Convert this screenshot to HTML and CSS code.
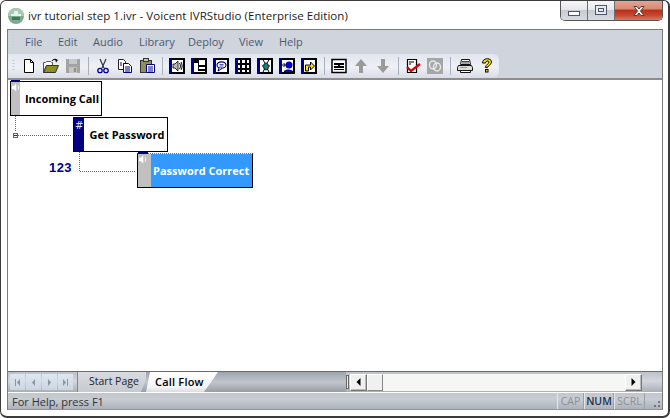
FILE: index.html
```html
<!DOCTYPE html>
<html lang="en">
<head>
<meta charset="utf-8">
<title>ivr tutorial step 1.ivr - Voicent IVRStudio (Enterprise Edition)</title>
<link rel="stylesheet" href="styles.css">
</head>
<body>
<div class="window">
  <header class="titlebar">
    <svg class="appicon" width="16" height="16" viewBox="0 0 16 16"><circle cx="8" cy="8" r="8" fill="#7fa98f"/><path d="M0 8a8 8 0 0 1 16 0z" fill="#a9c9b4"/><rect x="3" y="6" width="10" height="2" fill="#e8f2ea"/><rect x="4" y="9" width="8" height="3" fill="#3f7a57"/><rect x="6" y="3" width="4" height="3" fill="#e8f2ea"/></svg>
    <span class="title">ivr tutorial step 1.ivr - Voicent IVRStudio (Enterprise Edition)</span>
    <div class="caption">
      <div class="capbtn min"><span class="minglyph"></span></div>
      <div class="capbtn max"><span class="maxglyph"></span></div>
      <div class="capbtn close"><svg width="16" height="12" viewBox="0 0 16 12"><path d="M3 1.500h3l2 2.500 2-2.500h3l-3.500 4.500 3.500 4.500h-3l-2-2.500-2 2.500h-3l3.500-4.500z" fill="#f4f1ef" stroke="#5b3a33" stroke-width="1"/></svg></div>
    </div>
  </header>
  <div class="client">
    <nav class="menubar">
      <span class="grip"></span>
      <span class="menu m-file">File</span>
      <span class="menu m-edit">Edit</span>
      <span class="menu m-audio">Audio</span>
      <span class="menu m-lib">Library</span>
      <span class="menu m-dep">Deploy</span>
      <span class="menu m-view">View</span>
      <span class="menu">Help</span>
    </nav>
    <div class="toolbar">
      <span class="grip"></span>
      <span class="tb"><svg width="16" height="16" viewBox="0 0 16 16"><path d="M3.500 1.500h6l3 3v10h-9z" fill="#fff" stroke="#000"/><path d="M9.500 1.500v3h3" fill="none" stroke="#000"/></svg></span>
      <span class="tb"><svg width="16" height="16" viewBox="0 0 16 16"><path d="M0.500 14.500v-10h2l1-1h4l1 1h1v3h-6l-3 7z" fill="#fff" stroke="#555"/><path d="M0.500 14.500l3-7h12l-3 7z" fill="#8f8f1f" stroke="#333"/><path d="M9 3c1-2 3-2 4-1" fill="none" stroke="#000"/><path d="M12 0.500l3 1.500-2 2.500z" fill="#000"/></svg></span>
      <span class="tb"><svg width="16" height="16" viewBox="0 0 16 16"><rect x="1" y="1" width="14" height="14" fill="#a3a3a3"/><rect x="4" y="1" width="8" height="5" fill="#c8c8c8"/><rect x="4" y="9" width="8" height="6" fill="#c4c4c4"/><rect x="9" y="10" width="2" height="4" fill="#8b8b8b"/></svg></span>
      <span class="tsep"></span>
      <span class="tb"><svg width="16" height="16" viewBox="0 0 16 16"><path d="M5 1l4 9M11 1l-4 9" fill="none" stroke="#333" stroke-width="1.200"/><circle cx="5" cy="12.500" r="2.200" fill="none" stroke="#00008b" stroke-width="1.300"/><circle cx="11" cy="12.500" r="2.200" fill="none" stroke="#00008b" stroke-width="1.300"/></svg></span>
      <span class="tb"><svg width="16" height="16" viewBox="0 0 16 16"><path d="M1.500 1.500h5l2 2v2h-2v6h-5z" fill="#fff" stroke="#222"/><path d="M6.500 5.500h5l3 3v6h-8z" fill="#fff" stroke="#00008b"/><path d="M3 5h2M3 7h2M8 9h5M8 11h5M8 13h5" stroke="#00008b"/></svg></span>
      <span class="tb"><svg width="16" height="16" viewBox="0 0 16 16"><rect x="1.500" y="2.500" width="11" height="12" fill="#8f8f5a" stroke="#333"/><rect x="4.500" y="0.500" width="5" height="3" fill="#c8c8a0" stroke="#333"/><path d="M7.500 6.500h8v8h-8z" fill="#fff" stroke="#00008b"/><path d="M9 9h5M9 11h5M9 13h5" stroke="#00008b"/></svg></span>
      <span class="tsep"></span>
      <span class="tb"><svg width="16" height="16" viewBox="0 0 16 16"><rect x="1" y="1" width="14" height="14" fill="#fff" stroke="#000" stroke-width="2"/><rect x="0" y="0" width="3" height="16" fill="#00008b"/><path d="M4 6h2l3-3v10l-3-3h-2z" fill="#bbb" stroke="#000" stroke-width=".8"/><path d="M10.500 5c1.200 2 1.200 4 0 6M12 4c1.500 2.500 1.500 5.500 0 8" fill="none" stroke="#000"/></svg></span>
      <span class="tb"><svg width="16" height="16" viewBox="0 0 16 16"><rect x="1" y="1" width="14" height="14" fill="#fff" stroke="#000" stroke-width="2"/><rect x="0" y="0" width="3" height="16" fill="#00008b"/><rect x="3" y="2" width="5" height="3" fill="#000"/><rect x="7" y="4" width="1" height="9" fill="#000"/><rect x="8" y="7" width="6" height="2" fill="#000"/><rect x="8" y="11" width="6" height="2" fill="#000"/></svg></span>
      <span class="tb"><svg width="16" height="16" viewBox="0 0 16 16"><rect x="1" y="1" width="14" height="14" fill="#fff" stroke="#000" stroke-width="2"/><rect x="0" y="0" width="3" height="16" fill="#00008b"/><ellipse cx="8.500" cy="7" rx="4.500" ry="3.200" fill="#fff" stroke="#00008b" stroke-width="1.200"/><path d="M6 10l-1 3 4-2.500" fill="#fff" stroke="#00008b"/><path d="M6.500 6.500h4M6.500 8h4" stroke="#00008b" stroke-width=".7"/></svg></span>
      <span class="tb"><svg width="16" height="16" viewBox="0 0 16 16"><rect x="1" y="1" width="14" height="14" fill="#fff" stroke="#000" stroke-width="2"/><rect x="0" y="0" width="3" height="16" fill="#00008b"/><path d="M5 2h2v12h-2zM10 2h2v12h-2zM3 5h11v2h-11zM3 10h11v2h-11z" fill="#000"/></svg></span>
      <span class="tb"><svg width="16" height="16" viewBox="0 0 16 16"><rect x="1" y="1" width="14" height="14" fill="#fff" stroke="#000" stroke-width="2"/><rect x="0" y="0" width="3" height="16" fill="#00008b"/><ellipse cx="9" cy="8.500" rx="2.500" ry="3.500" fill="#1a7f7f" stroke="#000" stroke-width=".8"/><path d="M6 2l2 3M12 2l-2 3M5 8h1.500M11.500 8h1.500M6 14l1.500-3M12 14l-1.500-3" stroke="#000"/></svg></span>
      <span class="tb"><svg width="16" height="16" viewBox="0 0 16 16"><rect x="1" y="1" width="14" height="14" fill="#fff" stroke="#000" stroke-width="2"/><rect x="0" y="0" width="3" height="16" fill="#00008b"/><circle cx="10" cy="7" r="3.500" fill="#0000c8"/><path d="M5 13c2-2 6-2 9 0v1h-9z" fill="#0000c8"/><path d="M3 7h3M4.500 5l2 2-2 2" fill="none" stroke="#000"/></svg></span>
      <span class="tb"><svg width="16" height="16" viewBox="0 0 16 16"><rect x="1" y="1" width="14" height="14" fill="#fff" stroke="#000" stroke-width="2"/><rect x="0" y="0" width="3" height="16" fill="#00008b"/><path d="M4.500 13v-6h5v-3l4 4-4 4v-3h-2v4z" fill="#ffe000" stroke="#000"/></svg></span>
      <span class="tsep"></span>
      <span class="tb"><svg width="16" height="16" viewBox="0 0 16 16"><rect x="1" y="1.500" width="14" height="13" fill="#fff" stroke="#000" stroke-width="1.500"/><path d="M3 5h10v2h-4v1h4v2h-10v-2h4v-1h-4z" fill="#000"/><path d="M3 11h10v1h-10z" fill="#000"/></svg></span>
      <span class="tb"><svg width="16" height="16" viewBox="0 0 16 16"><path d="M8 1l6 7h-4v7h-4v-7h-4z" fill="#9a9a9a"/></svg></span>
      <span class="tb"><svg width="16" height="16" viewBox="0 0 16 16"><path d="M8 15l6-7h-4v-7h-4v7h-4z" fill="#9a9a9a"/></svg></span>
      <span class="tsep"></span>
      <span class="tb"><svg width="16" height="16" viewBox="0 0 16 16"><path d="M2.500 1.500h9v13h-9z" fill="#fff" stroke="#000" stroke-width="1.200"/><path d="M4 4h5M4 6h2" stroke="#000"/><path d="M2 9l4 4 9-7" fill="none" stroke="#e00000" stroke-width="2.400"/></svg></span>
      <span class="tb"><svg width="16" height="16" viewBox="0 0 16 16"><rect width="16" height="16" fill="#a6a6a6"/><ellipse cx="6" cy="7" rx="3.500" ry="4" fill="none" stroke="#e8e8e8" stroke-width="1.500"/><ellipse cx="10" cy="9" rx="3.500" ry="4" fill="none" stroke="#e8e8e8" stroke-width="1.500"/></svg></span>
      <span class="tsep"></span>
      <span class="tb"><svg width="16" height="16" viewBox="0 0 16 16"><path d="M4.500 1.500h8l1 5h-10z" fill="#fff" stroke="#111"/><path d="M5 3.500h7M5 5h7" stroke="#111" stroke-width=".8"/><path d="M1.500 7.500h13l1 2v3h-15v-3z" fill="#ddd" stroke="#111"/><rect x="3" y="9" width="7" height="1" fill="#b8a800"/><path d="M3.500 12.500h10v2h-10z" fill="#fff" stroke="#111"/></svg></span>
      <span class="tb"><svg width="16" height="16" viewBox="0 0 16 16"><path d="M3.500 5c0-5.500 9-5.500 9-1 0 3-3.500 3-4 5.500h-2c0-3 3.500-3.500 3.500-5.500 0-1.500-3.500-1.500-3.500 1z" fill="#ffe600" stroke="#000"/><rect x="6.500" y="11.500" width="2.500" height="2.500" fill="#ffe600" stroke="#000"/></svg></span>
    </div>
    <main class="canvas">
      <svg class="wires" width="300" height="120" viewBox="0 0 300 120">
        <path class="wire" d="M7.500 35V51M10 54.500H64M71.500 71V90.500H128"/>
        <rect x="5.500" y="52.500" width="4" height="4" fill="#fff" stroke="#666"/>
        <path d="M6 54.500h3" stroke="#333"/>
      </svg>
      <span class="digits">123</span>
      <div class="node n1"><div class="strip grey"><span class="cap"></span><svg class="spk" width="9" height="9" viewBox="0 0 9 9"><path d="M0 3h2l2-2v7l-2-2h-2zM6 2c1 1.500 1 3.500 0 5" fill="#fff" stroke="#fff" stroke-width=".5"/></svg></div><div class="label">Incoming Call</div></div>
      <div class="node n2"><div class="strip navy"><span class="hash">#</span></div><div class="label">Get Password</div></div>
      <div class="node n3"><div class="strip grey"><span class="cap"></span><svg class="spk" width="9" height="9" viewBox="0 0 9 9"><path d="M0 3h2l2-2v7l-2-2h-2zM6 2c1 1.500 1 3.500 0 5" fill="#fff" stroke="#fff" stroke-width=".5"/></svg></div><div class="label sel">Password Correct</div></div>
    </main>
    <div class="tabbar">
      <div class="navs">
        <span class="nav"><svg width="7" height="7" viewBox="0 0 7 7"><path d="M1 0h1v7h-1zM6 0v7l-3-3.500z" fill="#8a96a4"/></svg></span>
        <span class="nav"><svg width="7" height="7" viewBox="0 0 7 7"><path d="M5 0v7l-3-3.500z" fill="#8a96a4"/></svg></span>
        <span class="nav"><svg width="7" height="7" viewBox="0 0 7 7"><path d="M2 0v7l3-3.500z" fill="#8a96a4"/></svg></span>
        <span class="nav"><svg width="7" height="7" viewBox="0 0 7 7"><path d="M1 0v7l3-3.500zM5 0h1v7h-1z" fill="#8a96a4"/></svg></span>
      </div>
      <div class="tabs">
        <span class="tab start">Start Page</span>
        <span class="tab flow">Call Flow</span>
      </div>
      <div class="hscroll">
        <span class="sgrip"></span>
        <span class="sbtn"><svg width="5" height="8" viewBox="0 0 5 8"><path d="M4.500 0v8l-4-4z" fill="#000"/></svg></span>
        <span class="thumb"></span>
        <span class="track"></span>
        <span class="sbtn right"><svg width="5" height="8" viewBox="0 0 5 8"><path d="M.5 0v8l4-4z" fill="#000"/></svg></span>
      </div>
    </div>
    <footer class="status">
      <span class="msg">For Help, press F1</span>
      <span class="pane off cap-p">CAP</span>
      <span class="pane num-p">NUM</span>
      <span class="pane off scrl-p">SCRL</span>
      <span class="sizegrip"></span>
    </footer>
  </div>
</div>
</body>
</html>
```
FILE: styles.css
```css
* { box-sizing: border-box; }
html, body { margin: 0; padding: 0; background: #fff; }
body { width: 670px; height: 418px; overflow: hidden; font-family: "Open Sans", "Noto Sans", sans-serif; }

.window {
  width: 670px; height: 418px;
  display: flex; flex-direction: column;
  background: #fff;
  border: 1px solid #3c3c3c;
  border-bottom-width: 2px;
  border-right-width: 2px;
  border-radius: 6px 6px 7px 7px;
  padding: 0 5px 6px 6px;
}

.titlebar { height: 28px; flex: none; display: flex; align-items: flex-start; position: relative; }
.appicon { margin: 7px 4px 0 1px; }
.title { margin-top: 6px; font-size: 11.500px; line-height: 17px; letter-spacing: .05px; color: #1c1c1c; white-space: nowrap; }
.caption {
  margin-left: auto; height: 20px; width: 103px;
  display: flex; border: 1px solid #555; border-top: 0; border-radius: 0 0 5px 5px; overflow: hidden;
}
.capbtn { display: flex; align-items: center; justify-content: center; height: 100%; }
.min, .max { width: 27px; background: linear-gradient(#f6f6f8 0, #e6e8ec 45%, #c6cad2 50%, #d8dce2 100%); border-right: 1px solid #6a6e78; }
.close { flex: 1; background: linear-gradient(#e3a592 0, #d98a74 40%, #b8321c 50%, #c9452e 75%, #d77a62 100%); }
.minglyph { width: 12px; height: 5px; margin-top: 5px; border: 1px solid #50566a; background: #fff; }
.maxglyph { width: 12px; height: 10px; margin-top: -2px; border: 1px solid #50566a; background: #e8eaee; box-shadow: inset 0 0 0 2px #e8eaee, inset 0 0 0 3px #50566a; }

.client { flex: 1; min-height: 0; display: flex; flex-direction: column; border: 1px solid #7a7a7a; border-bottom: 0; background: #d0d4dc; }

.menubar { height: 24px; flex: none; display: flex; align-items: center; padding: 0 0 2px 4px; background: #d0d4dc; font-size: 11px; color: #4b5a72; }
.grip { width: 3px; height: 12px; flex: none; background-image: linear-gradient(#fff 0, #9aa0aa 1px, transparent 1px); background-size: 3px 3px; }
.menu { margin-right: 15px; }
.menubar .grip { margin-right: 10px; }
.m-file { width: 18px; } .m-edit { width: 20px; } .m-audio { width: 31px; } .m-lib { width: 34px; } .m-dep { width: 36px; } .m-view { width: 25px; }

.toolbar {
  height: 24px; width: 491px; flex: none;
  display: flex; align-items: center; padding-left: 4px;
  background: linear-gradient(#e2e6ee, #eef0f6 55%, #d8dce6);
  border-radius: 0 6px 6px 0;
}
.toolbar .grip { margin-right: 3px; }
.tb { width: 22px; height: 22px; flex: none; display: flex; align-items: center; justify-content: center; }
.tb svg { display: block; }
.tsep { width: 8px; height: 18px; flex: none; background: linear-gradient(#aab0bb, #aab0bb) center / 1px 100% no-repeat; }

.canvas { flex: 1; min-height: 0; position: relative; background: #fff; border-top: 2px solid #8e8e8e; }
.wires { position: absolute; left: 0; top: 1px; }
.wire { fill: none; stroke: #666; stroke-dasharray: 1 1; }
.digits { position: absolute; left: 41px; top: 81px; font: 700 13px/14px "Liberation Sans", sans-serif; letter-spacing: .4px; color: #00008b; }

.node { position: absolute; display: flex; height: 35px; border: 1px solid #000; background: #fff; }
.n1 { left: 2px; top: 1px; width: 92px; }
.n2 { left: 65px; top: 37px; width: 95px; }
.n3 { left: 129px; top: 73px; width: 116px; }
.strip { position: relative; flex: none; }
.strip.grey { background: #c0c0c0; }
.strip.navy { background: #000080; width: 10px; }
.n1 .strip { width: 9px; }
.n3 .strip { width: 13px; }
.cap { position: absolute; left: 0; top: -2px; height: 2px; width: 100%; background: #000080; }
.n3 .cap { width: 10px; }
.spk { position: absolute; left: 1px; top: 1px; }
.hash { position: absolute; left: 1px; top: 2px; font: 400 10px/11px "DejaVu Sans", sans-serif; color: #dfe0f0; }
.label { flex: 1; display: flex; align-items: center; justify-content: center; font: 700 11px/14px "Open Sans", sans-serif; color: #000; white-space: nowrap; }
.n1 .label { padding-left: 3px; }
.n2 .label { padding-left: 3px; }
.label.sel { background: #3399ff; color: #fff; justify-content: flex-start; padding-left: 2px; }
.n3 { border-top: 1px dotted #c46a00; }

.tabbar { height: 21px; flex: none; display: flex; align-items: center; background: linear-gradient(#bcc1c9, #d4d7dd 45%, #a9aeb7); border-top: 1px solid #6c6c6c; }
.navs { display: flex; gap: 1px; padding-left: 2px; width: 69px; flex: none; }
.nav { width: 15px; height: 16px; display: flex; align-items: center; justify-content: center; background: linear-gradient(#dfe7f1, #cdd5e0); }
.tabs { display: flex; align-self: stretch; flex: none; width: 269px; background: linear-gradient(#9ea3ac, #c3c6cc 50%, #989da6); }
.tab { display: flex; align-items: center; font-size: 10.500px; height: 100%; flex: none; padding-bottom: 2px; }
.start { width: 69px; padding-left: 11px; color: #222; background: linear-gradient(#d8dbe0, #c6cad1); border-left: 1px solid #80858e; clip-path: polygon(0 0, 100% 0, 100% 35%, 64px 100%, 0 100%); }
.flow { width: 72px; padding-left: 9px; font-weight: 600; font-size: 11px; letter-spacing: .2px; color: #000; background: linear-gradient(#fff, #f4f5f7 75%, #d9dce2); clip-path: polygon(0 100%, 4px 0, 100% 0, 58px 100%); }
.hscroll { flex: 1; display: flex; align-items: center; height: 100%; padding-right: 20px; }
.sgrip { width: 3px; height: 14px; margin-right: 1px; background: #eef0f3; border: 1px solid #666; flex: none; }
.sbtn { width: 17px; height: 17px; flex: none; display: flex; align-items: center; justify-content: center; background: #f0f0f0; border: 1px solid #777; border-top-color: #fff; border-left-color: #fff; box-shadow: inset -1px -1px 0 #bbb; }
.thumb { width: 16px; height: 17px; flex: none; background: #f0f0f0; border: 1px solid #888; border-left-color: #fff; border-top-color: #fff; }
.track { flex: 1; height: 17px; background: #f6f6f4; }

.status { height: 18px; flex: none; display: flex; align-items: center; padding-left: 4px; background: linear-gradient(#c2c6cd, #c8ccd3 40%, #adb2bb); border-top: 1px solid #fff; border-bottom: 1px solid #8d929b; font-size: 11px; color: #333; }
.msg { flex: 1; }
.pane { height: 100%; display: flex; align-items: center; justify-content: center; border-left: 1px solid #e4e6ea; border-right: 1px solid #9aa0a8; font-size: 10.500px; font-weight: 600; }
.cap-p { width: 27px; } .num-p { width: 30px; color: #23304a; } .scrl-p { width: 31px; }
.off { color: #8a909a; font-weight: 400; }
.sizegrip { width: 17px; height: 100%; flex: none; background: radial-gradient(circle at 1px 1px, #70767f 1px, transparent 1.200px) right bottom / 4px 4px; clip-path: polygon(100% 30%, 100% 100%, 30% 100%); }
```
